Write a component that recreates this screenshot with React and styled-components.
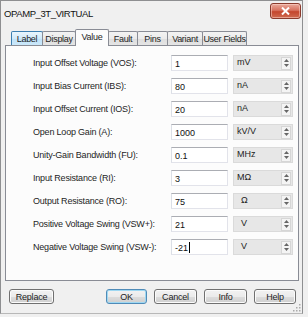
import React from 'react';
import styled, { createGlobalStyle } from 'styled-components';

const Global = createGlobalStyle`
  html, body { margin: 0; padding: 0; background: #f0f0f0; }
  body {
    font-family: "Liberation Sans", Arial, sans-serif;
    font-size: 9px;
    color: #1e1e1e;
  }
`;

const Window = styled.div`
  position: relative;
  box-sizing: border-box;
  width: 303px;
  height: 314px;
  border: 1px solid #8e8f91;
  border-bottom-color: #b8b8b8;
  background: #f0f0f0;
  display: flex;
  flex-direction: column;
`;

const TitleBar = styled.div`
  height: 28px;
  display: flex;
  justify-content: space-between;
  align-items: flex-start;
  padding: 0 1px 0 3px;
`;

const Title = styled.div`
  margin-top: 7px;
  font-size: 9.5px;
  letter-spacing: -0.4px;
  color: #111;
`;

const CloseButton = styled.div`
  margin-top: 2px;
  width: 31px;
  height: 16px;
  box-sizing: border-box;
  border: 1px solid #8a3a2c;
  border-radius: 3px;
  background: linear-gradient(#e9a99b 0%, #d7725f 45%, #c4462d 55%, #cf6a50 100%);
  box-shadow: inset 0 0 0 1px rgba(255, 220, 210, 0.5);
  display: flex;
  align-items: center;
  justify-content: center;
`;

const Body = styled.div`
  padding: 0 0 0 4px;
  display: flex;
  flex-direction: column;
`;

const TabStrip = styled.div`
  height: 16px;
  display: flex;
  align-items: flex-end;
  padding-left: 6px;
  position: relative;
  z-index: 2;
`;

const Tab = styled.div`
  box-sizing: border-box;
  width: ${p => p.$w}px;
  height: ${p => (p.$active ? 17 : 14)}px;
  margin-left: -1px;
  margin-bottom: ${p => (p.$active ? -1 : 0)}px;
  border: 1px solid #898c95;
  border-bottom: none;
  border-radius: 2px 2px 0 0;
  background: ${p =>
    p.$active
      ? '#fcfcfc'
      : p.$hover
      ? 'linear-gradient(#eaf6fd, #d0eafb 50%, #bfe2f9 51%, #cbe8fa)'
      : 'linear-gradient(#f3f3f3, #ebebeb 50%, #dddddd 51%, #e5e5e5)'};
  border-color: ${p => (p.$hover ? '#3c7fb1' : '#898c95')};
  display: flex;
  align-items: center;
  justify-content: center;
  padding-bottom: ${p => (p.$active ? 3 : 0)}px;
  white-space: nowrap;
  letter-spacing: -0.3px;
  color: #1e1e1e;
  &:first-child { margin-left: 0; }
`;

const Panel = styled.div`
  box-sizing: border-box;
  width: 294px;
  height: 236px;
  border: 1px solid #898c95;
  background: #fcfcfc;
  padding: 9px 0 0 27px;
  display: flex;
  flex-direction: column;
  gap: 7px;
`;

const Row = styled.div`
  display: grid;
  grid-template-columns: 133px 57px 60px;
  column-gap: 5px;
  height: 16px;
  align-items: center;
`;

const Label = styled.div`
  letter-spacing: -0.2px;
  white-space: nowrap;
  color: #1e1e1e;
`;

const Input = styled.div`
  box-sizing: border-box;
  height: 16px;
  background: #fff;
  border: 1px solid #e2e3ea;
  border-top-color: #abadb3;
  border-left-color: #dbdfe6;
  padding: 0 3px;
  display: flex;
  align-items: center;
  padding-top: 1px;
  color: #111;
`;

const Caret = styled.span`
  display: inline-block;
  width: 1px;
  height: 11px;
  background: #000;
  margin-left: 1px;
`;

const UnitBox = styled.div`
  box-sizing: border-box;
  height: 16px;
  background: #e7e7e7;
  border: 1px solid #dadada;
  display: flex;
  align-items: center;
  justify-content: space-between;
  padding: 0 1px 0 3px;
  color: #222;
`;

const UnitText = styled.span`
  padding-left: ${p => (p.$indent ? 4 : 0)}px;
  margin-top: -3px;
`;

const Spinner = styled.div`
  box-sizing: border-box;
  width: 10px;
  height: 13px;
  border: 1px solid #d6d6d6;
  background: #f4f4f4;
  display: flex;
  flex-direction: column;
  align-items: center;
  justify-content: space-around;
`;

const ButtonRow = styled.div`
  display: flex;
  align-items: center;
  margin-top: 8px;
  padding-right: 3px;
  width: 294px;
  box-sizing: border-box;
`;

const Button = styled.div`
  box-sizing: border-box;
  width: ${p => p.$w}px;
  height: 15px;
  margin-left: ${p => p.$ml || '0'};
  border: 1px solid ${p => (p.$default ? '#4f8bb8' : '#707070')};
  border-radius: 3px;
  background: linear-gradient(#f2f2f2 0%, #ebebeb 50%, #dddddd 51%, #cfcfcf 100%);
  box-shadow: inset 0 0 0 1px ${p => (p.$default ? '#9fd8f2' : '#fbfbfb')};
  display: flex;
  align-items: center;
  justify-content: center;
  letter-spacing: -0.2px;
  color: #1e1e1e;
`;

const Grip = styled.svg`
  position: absolute;
  right: 1px;
  bottom: 1px;
`;

const rows = [
  ['Input Offset Voltage (VOS):', '1', 'mV'],
  ['Input Bias Current (IBS):', '80', 'nA'],
  ['Input Offset Current (IOS):', '20', 'nA'],
  ['Open Loop Gain (A):', '1000', 'kV/V'],
  ['Unity-Gain Bandwidth (FU):', '0.1', 'MHz'],
  ['Input Resistance (RI):', '3', 'MΩ'],
  ['Output Resistance (RO):', '75', 'Ω', true],
  ['Positive Voltage Swing (VSW+):', '21', 'V', true],
  ['Negative Voltage Swing (VSW-):', '-21', 'V', true, true],
];

const tabs = [
  ['Label', 32, false, true],
  ['Display', 34],
  ['Value', 34, true],
  ['Fault', 30],
  ['Pins', 31],
  ['Variant', 36],
  ['User Fields', 45],
];

function SpinArrows() {
  return (
    <Spinner>
      <svg width="5" height="3" viewBox="0 0 5 3"><path d="M0 3 L2.5 0 L5 3 Z" fill="#666" /></svg>
      <svg width="5" height="3" viewBox="0 0 5 3"><path d="M0 0 L2.5 3 L5 0 Z" fill="#666" /></svg>
    </Spinner>
  );
}

export default function App() {
  return (
    <>
      <Global />
      <Window>
        <TitleBar>
          <Title>OPAMP_3T_VIRTUAL</Title>
          <CloseButton>
            <svg width="9" height="8" viewBox="0 0 9 8">
              <path d="M1 0.5 L8 7.5 M8 0.5 L1 7.5" stroke="#fff" strokeWidth="2" />
            </svg>
          </CloseButton>
        </TitleBar>
        <Body>
          <TabStrip>
            {tabs.map(([t, w, active, hover]) => (
              <Tab key={t} $w={w} $active={active} $hover={hover}>{t}</Tab>
            ))}
          </TabStrip>
          <Panel>
            {rows.map(([label, val, unit, indent, caret]) => (
              <Row key={label}>
                <Label>{label}</Label>
                <Input>{val}{caret && <Caret />}</Input>
                <UnitBox>
                  <UnitText $indent={indent}>{unit}</UnitText>
                  <SpinArrows />
                </UnitBox>
              </Row>
            ))}
          </Panel>
          <ButtonRow>
            <Button $w={45} $ml="4px">Replace</Button>
            <Button $w={41} $ml="auto" $default>OK</Button>
            <Button $w={43} $ml="7px">Cancel</Button>
            <Button $w={43} $ml="7px">Info</Button>
            <Button $w={42} $ml="7px">Help</Button>
          </ButtonRow>
        </Body>
        <Grip width="9" height="9" viewBox="0 0 9 9">
          <rect x="7" y="1" width="1.5" height="1.5" fill="#aaa" />
          <rect x="4" y="4" width="1.5" height="1.5" fill="#aaa" />
          <rect x="7" y="4" width="1.5" height="1.5" fill="#aaa" />
          <rect x="1" y="7" width="1.5" height="1.5" fill="#aaa" />
          <rect x="4" y="7" width="1.5" height="1.5" fill="#aaa" />
          <rect x="7" y="7" width="1.5" height="1.5" fill="#aaa" />
        </Grip>
      </Window>
    </>
  );
}
